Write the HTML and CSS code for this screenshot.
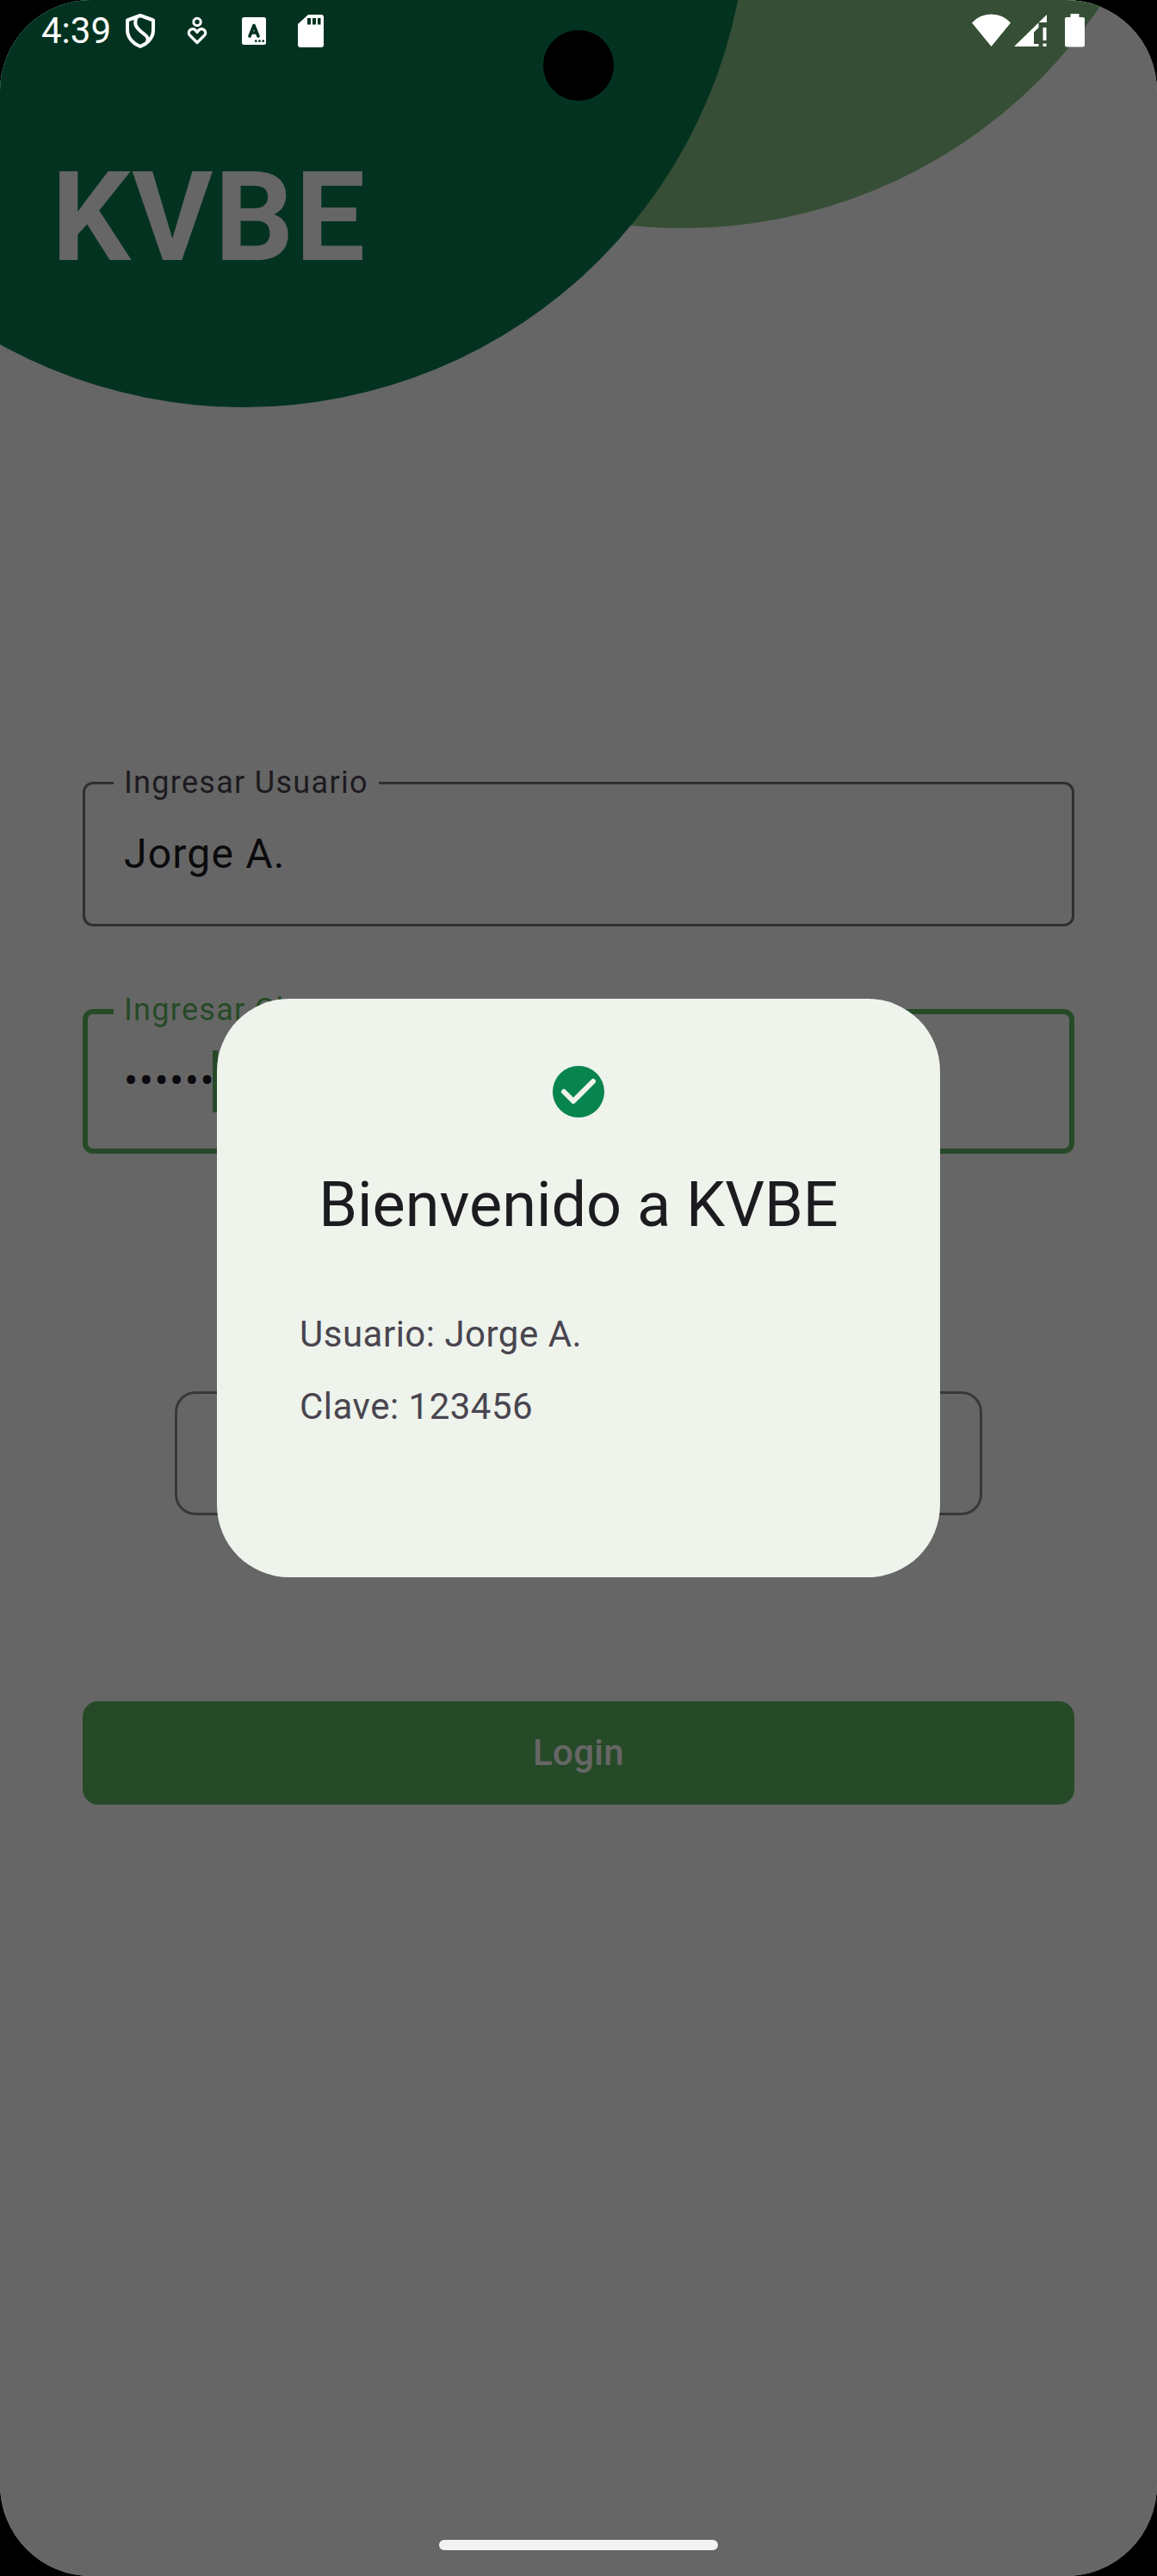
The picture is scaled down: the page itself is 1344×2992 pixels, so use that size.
FILE: index.html
```html
<!DOCTYPE html>
<html lang="es">
<head>
<meta charset="utf-8">
<title>KVBE</title>
<link rel="stylesheet" href="styles.css">
</head>
<body>
<div class="phone">
  <main class="screen">
    <svg class="blobs" width="1344" height="500" viewBox="0 0 1344 500" aria-hidden="true">
      <circle cx="793" cy="-320" r="585" fill="#87c385"/>
      <circle cx="283" cy="-112" r="585" fill="#088050"/>
    </svg>
    <h1 class="brand">KVBE</h1>
    <form class="form">
      <div class="field">
        <span class="field-label">Ingresar Usuario</span>
        <span class="field-value">Jorge A.</span>
      </div>
      <div class="field field-focused">
        <span class="field-label">Ingresar Clave</span>
        <span class="field-value field-dots">••••••</span><span class="caret"></span>
      </div>
      <div class="outlined"></div>
      <div class="login">Login</div>
    </form>
  </main>

  <div class="scrim">
    <section class="dialog">
      <svg class="dialog-icon" width="60" height="60" viewBox="0 0 60 60"><circle cx="30" cy="30" r="30" fill="#08844f"/><path d="M13 30l11 11L47 18" fill="none" stroke="#eef3ec" stroke-width="6" stroke-linecap="round" stroke-linejoin="round"/></svg>
      <h2 class="dialog-title">Bienvenido a KVBE</h2>
      <p class="dialog-line">Usuario: Jorge A.</p>
      <p class="dialog-line">Clave: 123456</p>
    </section>
  </div>

  <header class="status">
    <span class="clock">4:39</span>
    <svg class="status-left" width="240" height="44" viewBox="144 14 240 44" fill="#fff">
      <g fill="none" stroke="#fff" stroke-width="4" stroke-linejoin="round">
        <path d="M163 18L178 23.500V35C178 44 171 51 163 54C155 51 148 44 148 35V23.500Z"/>
        <path d="M158.500 20C156 27 157 31 163 36C169 41 173.500 43 171 49"/>
        <circle cx="229" cy="25.500" r="4.200" stroke-width="3"/>
        <path d="M229 49.500L220.500 41C216.500 37 223 31 227 35L229 37.500L231 35C235 31 241.500 37 237.500 41Z" stroke-width="3.200"/>
      </g>
      <rect x="281" y="20" width="28" height="32" rx="2.500"/>
      <path d="M290 42L295 29.500L300 42M292 38H298" fill="none" stroke="#033320" stroke-width="3.600" stroke-linecap="round" stroke-linejoin="round"/>
      <g fill="#033320"><circle cx="297.300" cy="47.700" r="1.400"/><circle cx="301.500" cy="47.700" r="1.400"/><circle cx="305.700" cy="47.700" r="1.400"/></g>
      <path d="M358 17H373Q376 17 376 20V52Q376 55 373 55H349Q346 55 346 52V28Z"/>
      <path d="M357 21h4v7.500h-4zM363 21h4v7.500h-4zM369 21h3.500v7.500h-3.500z" fill="#033320"/>
    </svg>
    <svg class="status-right" width="140" height="44" viewBox="1124 14 140 44" fill="#fff">
      <path d="M1129 26.500Q1138 16.500 1151.500 16.500T1174 26.500L1151.500 54Z"/>
      <path d="M1178 54L1216 17V26H1206.500V32L1201 37.500V51H1206.500V54ZM1211.500 32h4v15h-4zM1211.500 50.500h4v3.500h-4z"/>
      <path d="M1243.500 16h10v4h4.500q2 0 2 2V52.500q0 2-2 2h-19q-2 0-2-2V22q0-2 2-2h4.500z"/>
    </svg>
  </header>
  <div class="camera"></div>
  <div class="nav-handle"></div>
</div>
</body>
</html>
```
FILE: styles.css
```css
* { box-sizing: border-box; }
body { margin: 0; background: #000; font-family: Roboto, sans-serif; }
h1, h2, p { margin: 0; }
.phone {
  position: relative;
  width: 1344px;
  height: 2992px;
  border-radius: 106px;
  overflow: hidden;
  background: #fff;
}
.screen { padding: 168px 96px 0; }
.blobs { position: absolute; left: 0; top: 0; }
.brand {
  position: relative;
  margin-left: -36px;
  font-size: 144px;
  line-height: 170px;
  font-weight: 700;
  letter-spacing: 1.8px;
  color: #fff;
}
.form { display: flex; flex-direction: column; padding-top: 570px; }
.field {
  position: relative;
  display: flex;
  align-items: center;
  height: 168px;
  margin-bottom: 96px;
  padding-left: 45px;
  border: 3px solid #79747e;
  border-radius: 12px;
}
.field-label {
  position: absolute;
  left: 33px;
  top: -26px;
  padding: 0 12px;
  background: #fff;
  font-size: 36px;
  line-height: 48px;
  letter-spacing: 1.3px;
  color: #49454f;
  white-space: nowrap;
}
.field-value {
  font-size: 48px;
  line-height: 72px;
  letter-spacing: 1.2px;
  color: #1c1b1f;
}
.field-dots { letter-spacing: 1.5px; }
.field-focused { border: 6px solid #5fb962; padding-left: 42px; }
.field-focused .field-label { left: 30px; top: -29px; color: #5fb962; }
.caret { width: 6px; height: 72px; margin-left: -3px; background: #5fb962; }
.outlined {
  height: 144px;
  margin: 180px 107px 0;
  border: 3px solid #8c8c8c;
  border-radius: 24px;
}
.login {
  height: 120px;
  margin-top: 216px;
  border-radius: 18px;
  background: #5fb962;
  color: #fff;
  font-size: 42px;
  line-height: 120px;
  font-weight: 500;
  letter-spacing: .3px;
  text-align: center;
}
.scrim {
  position: absolute;
  inset: 0;
  display: flex;
  align-items: center;
  justify-content: center;
  background: rgba(0, 0, 0, .6);
}
.dialog {
  display: flex;
  flex-direction: column;
  width: 840px;
  height: 672px;
  padding: 78px 96px 0;
  border-radius: 84px;
  background: #eef3ec;
}
.dialog-icon { align-self: center; }
.dialog-title {
  margin: 54px 0 72px;
  font-size: 72px;
  line-height: 96px;
  font-weight: 400;
  text-align: center;
  color: #1c1b1f;
  white-space: nowrap;
}
.dialog-line {
  margin-bottom: 24px;
  font-size: 42px;
  line-height: 60px;
  letter-spacing: .5px;
  color: #49454f;
}
.status {
  position: absolute;
  left: 0;
  top: 0;
  width: 1344px;
  padding: 14px 80px 0 48px;
  display: flex;
}
.clock { width: 96px; font-size: 42px; line-height: 44px; color: #fff; }
.status-right { margin-left: auto; }
.camera {
  position: absolute;
  left: 631px;
  top: 35px;
  width: 82px;
  height: 82px;
  border-radius: 50%;
  background: #000;
}
.nav-handle {
  position: absolute;
  left: 510px;
  top: 2950px;
  width: 324px;
  height: 12px;
  border-radius: 6px;
  background: #f2f2f2;
}
```
